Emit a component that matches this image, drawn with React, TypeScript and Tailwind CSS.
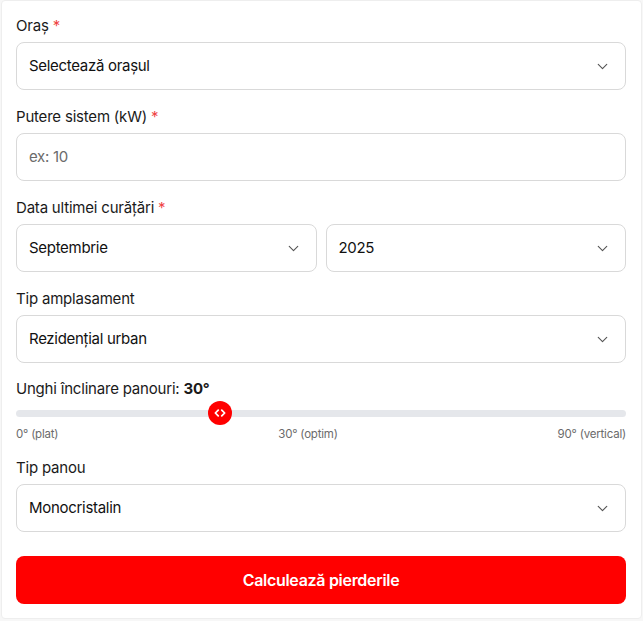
import React from "react";
import { ChevronDown, ChevronsLeftRight } from "lucide-react";

const font = { fontFamily: "Inter, 'Noto Sans', sans-serif" };

function Label({ text, req }: { text: React.ReactNode; req?: boolean }) {
  return (
    <div className="text-[15px] leading-5 tracking-[-0.2px] text-[#1a1a1a] mb-[6px]">
      {text}
      {req && <span className="text-[#ef4444] ml-1">*</span>}
    </div>
  );
}

function Select({ value }: { value: string }) {
  return (
    <div className="h-12 w-full rounded-lg border border-[#d9d9d9] bg-white flex items-center justify-between pl-3 pr-[14px]">
      <span className="text-[15px] tracking-[-0.3px] text-[#111]">{value}</span>
      <ChevronDown size={17} strokeWidth={1.6} className="text-[#555]" />
    </div>
  );
}

export default function App() {
  return (
    <div className="w-[643px] h-[621px] bg-[#f7f7f7]" style={font}>
      <div className="w-[641px] h-[619px] bg-white ml-[1px] border border-[#eeeeee] rounded-sm pl-[14px] pr-[15px] pt-[15px]">
        <Label text="Oraș" req />
        <Select value="Selectează orașul" />

        <div className="mt-[17px]">
          <Label text="Putere sistem (kW)" req />
          <div className="h-12 w-full rounded-lg border border-[#d9d9d9] bg-white flex items-center pl-3">
            <span className="text-[15px] tracking-[-0.3px] text-[#6b6b6b]">ex: 10</span>
          </div>
        </div>

        <div className="mt-[17px]">
          <Label text="Data ultimei curățări" req />
          <div className="grid grid-cols-2 gap-[9px]">
            <Select value="Septembrie" />
            <Select value="2025" />
          </div>
        </div>

        <div className="mt-[17px]">
          <Label text="Tip amplasament" />
          <Select value="Rezidențial urban" />
        </div>

        <div className="mt-[16px]">
          <div className="text-[15px] leading-5 tracking-[-0.2px] text-[#1a1a1a]">
            Unghi înclinare panouri: <span className="font-bold">30°</span>
          </div>
          <div className="relative h-[24px] mt-[2px] flex items-center">
            <div className="w-full h-[7px] rounded-full bg-[#e5e7eb]" />
            <div className="absolute left-[192px] top-0 w-6 h-6 rounded-full bg-[#ff0000] flex items-center justify-center">
              <ChevronsLeftRight size={14} strokeWidth={3} className="text-white" />
            </div>
          </div>
          <div className="flex justify-between text-[11.5px] leading-4 tracking-[-0.2px] text-[#6b6b6b] mt-[1px]">
            <span>0° (plat)</span>
            <span>30° (optim)</span>
            <span>90° (vertical)</span>
          </div>
        </div>

        <div className="mt-[16px]">
          <Label text="Tip panou" />
          <Select value="Monocristalin" />
        </div>

        <button className="mt-[24px] w-full h-12 rounded-lg bg-[#ff0000] text-white text-[16px] tracking-[-0.3px] font-semibold">
          Calculează pierderile
        </button>
      </div>
    </div>
  );
}
